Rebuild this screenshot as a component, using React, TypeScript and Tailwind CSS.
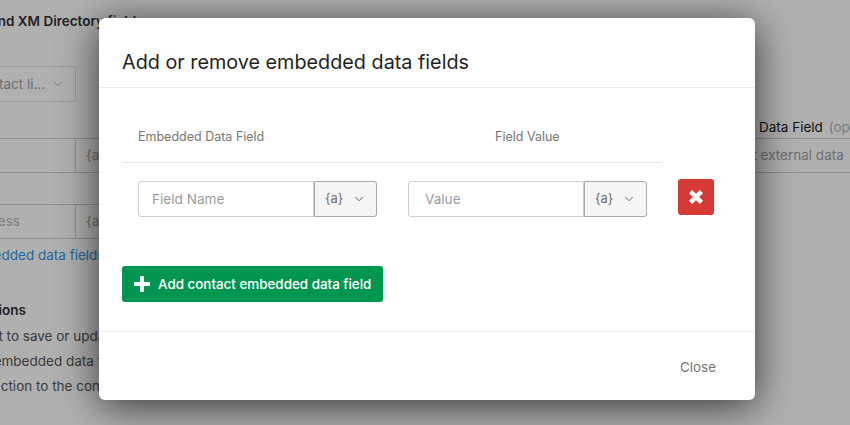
import { ChevronDown } from 'lucide-react'

function PipedButton() {
  return (
    <div className="flex h-[36px] w-[63px] shrink-0 items-center gap-[9px] rounded-r-[3px] border border-[#a8a8a8] bg-[#f5f5f5] pl-[10px] text-[13px] text-[#6f6f6f]">
      <span>{'{a}'}</span>
      <ChevronDown className="h-[14px] w-[14px] text-[#555555]" strokeWidth={1.5} />
    </div>
  )
}

function FieldInput({ placeholder, inset }: { placeholder: string; inset: string }) {
  return (
    <div className={`flex h-[36px] w-[176px] items-center rounded-l-[3px] border border-[#cfcfcf] bg-white text-[13.6px] text-[#9a9a9a] ${inset}`}>
      {placeholder}
    </div>
  )
}

function BackgroundPage() {
  return (
    <div className="flex h-full w-full justify-between text-[13.5px] text-[#3a3a3a]">
      <div className="-ml-[120px] w-[340px] shrink-0 pt-[11px]">
        <div className="whitespace-nowrap pl-[110px] font-semibold leading-[20px] text-[#222222]">
          and XM Directory fields
        </div>
        <div className="mt-[35px] flex h-[36px] w-[196px] items-center justify-between rounded-[3px] border border-[#999999] pl-[92px] pr-[10px] text-[#6e6e6e]">
          <span className="whitespace-nowrap">Contact li...</span>
          <ChevronDown className="h-[14px] w-[14px]" strokeWidth={1.5} />
        </div>
        <div className="mt-[36px] flex h-[35px]">
          <div className="w-[196px] border border-[#8f8f8f]" />
          <div className="flex w-[60px] items-center border border-l-0 border-[#8f8f8f] pl-[10px] text-[#6e6e6e]">{'{a}'}</div>
        </div>
        <div className="mt-[31px] flex h-[35px]">
          <div className="flex w-[196px] items-center border border-[#8f8f8f] pl-[50px] text-[#7c7c7c]">Email address</div>
          <div className="flex w-[60px] items-center border border-l-0 border-[#8f8f8f] pl-[10px] text-[#6e6e6e]">{'{a}'}</div>
        </div>
        <div className="mt-[6px] whitespace-nowrap pl-[56px] leading-[20px] text-[#1d6a9a]">Add embedded data fields</div>
        <div className="mt-[35px] whitespace-nowrap pl-[95px] font-semibold leading-[20px] text-[#222222]">Options</div>
        <div className="mt-[4px] whitespace-nowrap pl-[83px] leading-[25px]">Select to save or update</div>
        <div className="whitespace-nowrap pl-[84px] leading-[25px]">Add embedded data fields</div>
        <div className="whitespace-nowrap pl-[95px] leading-[25px]">Direction to the contact</div>
      </div>
      <div className="-mr-[100px] w-[200px] shrink-0 pt-[117px]">
        <div className="h-[21px] whitespace-nowrap pl-[9px] leading-[20px] text-[#111111]">
          Data Field <span className="pl-[2px] text-[#7c7c7c]">(optional)</span>
        </div>
        <div className="flex h-[35px] items-center whitespace-nowrap border-y border-[#8f8f8f] text-[#6e6e6e]">
          <span className="-ml-[33px]">Select external data</span>
        </div>
      </div>
    </div>
  )
}

export default function App() {
  return (
    <div className="relative h-[425px] w-[850px] overflow-hidden bg-[#b0b0b0] font-['Inter',sans-serif]">
      <BackgroundPage />

      <div className="absolute left-[99px] top-[18px] flex h-[382px] w-[656px] flex-col rounded-[6px] bg-white shadow-[0_6px_40px_rgba(0,0,0,0.7)]">
        <div className="flex h-[70px] shrink-0 items-center border-b border-[#ececec] pl-[23px] pt-[20px] text-[19.8px] text-[#1f1f1f]">
          Add or remove embedded data fields
        </div>

        <div className="flex-1 pl-[23px]">
          <div className="flex h-[75px] w-[540px] items-center border-b border-[#e6e6e6] pt-[24px] text-[12.5px] text-[#757575]">
            <div className="w-[373px] pl-[16px]">Embedded Data Field</div>
            <div>Field Value</div>
          </div>
          <div className="mt-[18px] flex items-start">
            <div className="ml-[16px] flex">
              <FieldInput placeholder="Field Name" inset="pl-[13px]" />
              <PipedButton />
            </div>
            <div className="ml-[31px] flex">
              <FieldInput placeholder="Value" inset="pl-[16px]" />
              <PipedButton />
            </div>
            <button className="ml-[31px] -mt-[2px] flex h-[36px] w-[36px] items-center justify-center rounded-[3px] bg-[#d63a35]">
              <svg className="h-[14px] w-[14px]" viewBox="0 0 14 14" fill="#ffffff">
                <path d="M3.2 0 7 3.8 10.8 0 14 3.2 10.2 7 14 10.8 10.8 14 7 10.2 3.2 14 0 10.8 3.8 7 0 3.2z" />
              </svg>
            </button>
          </div>
          <button className="mt-[49px] flex h-[36px] w-[261px] items-center whitespace-nowrap rounded-[3px] bg-[#009550] pl-[12px] text-[13.4px] font-medium text-white">
            <svg className="mr-[8px] h-[16px] w-[16px]" viewBox="0 0 17 17" fill="#ffffff">
              <path d="M6.5 0h4v6.5H17v4h-6.5V17h-4v-6.5H0v-4h6.5z" />
            </svg>
            Add contact embedded data field
          </button>
        </div>

        <div className="flex h-[69px] shrink-0 items-center justify-end border-t border-[#efefef] pr-[39px] pt-[2px] text-[13.4px] text-[#757575]">
          Close
        </div>
      </div>
    </div>
  )
}
